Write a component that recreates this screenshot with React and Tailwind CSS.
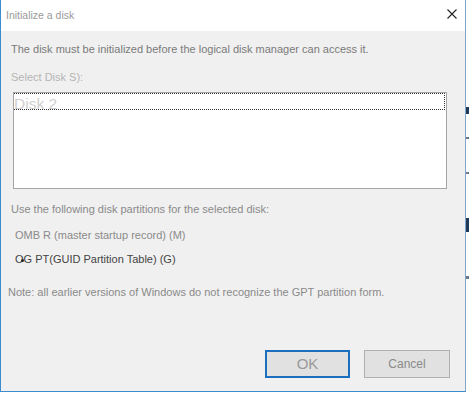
export default function App() {
  return (
    <div
      className="flex h-[394px] w-[469px] bg-white"
      style={{ fontFamily: '"Liberation Sans", Arial, sans-serif' }}
    >
      <div className="flex h-[392px] w-[466px] flex-col border border-t-0 border-[#3c8cd0] border-r-[#7fa6c8] bg-[#f0f0f0]">
        {/* title bar */}
        <div className="flex h-[31px] items-center justify-between bg-white pl-[5px] pr-[8px]">
          <span className="text-[10.5px] text-[#9a9a9a]">Initialize a disk</span>
          <svg width="10" height="10" viewBox="0 0 10 10" className="mt-[-3px]">
            <path d="M0.5 0.5 L9.5 9.5 M9.5 0.5 L0.5 9.5" stroke="#222" strokeWidth="1.1" fill="none" />
          </svg>
        </div>

        {/* body */}
        <div className="flex flex-1 flex-col">
          <p className="pl-[10px] pt-[11px] text-[11px] leading-[14px] text-[#7a7a7a]">
            The disk must be initialized before the logical disk manager can access it.
          </p>
          <p className="pl-[10px] pt-[14px] text-[11px] leading-[14px] text-[#b5b5b5]">Select Disk S):</p>

          <div className="ml-[12px] mt-[8px] h-[97px] w-[434px] border border-[#a5a5a5] bg-white">
            <div className="flex h-[17px] w-[431px] items-center border border-dotted border-[#333] border-l-0">
              <span className="mt-[4px] text-[15.5px] leading-[17px] text-[#cfcfcf]">Disk 2</span>
            </div>
          </div>

          <p className="pl-[10px] pt-[13px] text-[11px] leading-[14px] text-[#8a8a8a]">
            Use the following disk partitions for the selected disk:
          </p>
          <p className="pl-[14px] pt-[12px] text-[11px] leading-[14px] text-[#8a8a8a]">
            OMB R (master startup record) (M)
          </p>
          <p className="pl-[14px] pt-[10px] text-[11px] leading-[14px] text-[#444]">
            <span className="relative">
              O<span className="absolute left-[6px] top-[6px] h-[3px] w-[3px] rounded-full bg-[#222]" />
            </span>
            G PT(GUID Partition Table) (G)
          </p>
          <p className="pl-[7px] pt-[19px] text-[11px] leading-[14px] text-[#8a8a8a]">
            Note: all earlier versions of Windows do not recognize the GPT partition form.
          </p>

          <div className="flex justify-end gap-[14px] pr-[15px] pt-[51px]">
            <button className="flex h-[28px] w-[85px] items-center justify-center border-2 border-[#1c6fbe] bg-[#e1e1e1] text-[15px] text-[#9a9a9a]">
              OK
            </button>
            <button className="flex h-[28px] w-[86px] items-center justify-center border border-[#b0b0b0] bg-[#e1e1e1] text-[12px] text-[#8a8a8a]">
              Cancel
            </button>
          </div>
        </div>
      </div>
      <div className="flex w-[3px] flex-col bg-white">
        <div className="mt-[107px] h-[7px] w-[3px] bg-[#203a5a]" />
        <div className="mt-[23px] h-[2px] w-[3px] bg-[#6a7a8a]" />
        <div className="mt-[33px] h-[2px] w-[3px] bg-[#6a7a8a]" />
        <div className="mt-[44px] h-[14px] w-[3px] bg-[#203a5a]" />
        <div className="mt-[44px] h-[3px] w-[3px] bg-[#6a7a8a]" />
      </div>
    </div>
  );
}
